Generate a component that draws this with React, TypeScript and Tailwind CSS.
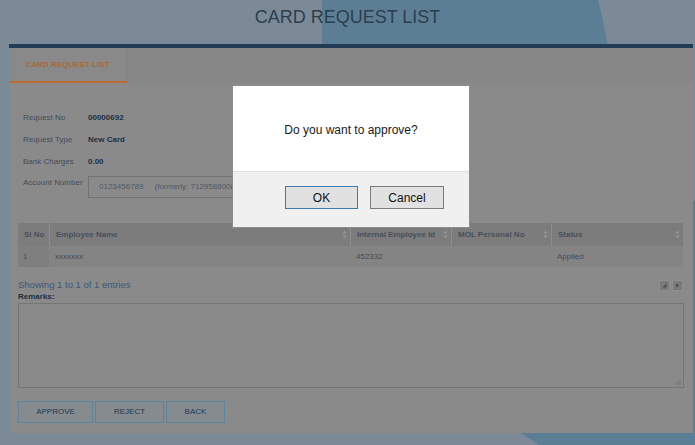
import React from 'react';

const columns = [
  { label: 'Sl No', width: 'w-[31px]', sort: false },
  { label: 'Employee Name', width: 'w-[301px]', sort: true },
  { label: 'Internal Employee Id', width: 'w-[101px]', sort: true },
  { label: 'MOL Personal No', width: 'w-[100px]', sort: true },
  { label: 'Status', width: 'w-[132px]', sort: true },
];

const details = [
  { label: 'Request No', value: '00000692' },
  { label: 'Request Type', value: 'New Card' },
  { label: 'Bank Charges', value: '0.00' },
];

function SortIcon() {
  return (
    <svg width="5" height="9" viewBox="0 0 5 9" className="shrink-0">
      <path d="M0.5 3.5 L2.5 0.5 L4.5 3.5Z" fill="#969696" />
      <path d="M0.5 5.5 L2.5 8.5 L4.5 5.5Z" fill="#969696" />
    </svg>
  );
}

function PageButton({ dir }: { dir: 'prev' | 'next' }) {
  return (
    <div className="w-[11px] h-[11px] bg-[#7a7a7a] border border-[#8f8f8f] flex items-center justify-center">
      <svg width="5" height="5" viewBox="0 0 5 5">
        {dir === 'prev' ? (
          <path d="M4.5 0.5 L4.5 4.5 L0.5 4.5Z" fill="#4c4c4c" />
        ) : (
          <path d="M1 0.5 L4 2.5 L1 4.5Z" fill="#4c4c4c" />
        )}
      </svg>
    </div>
  );
}

export default function App() {
  return (
    <div className="relative w-[695px] h-[445px] overflow-hidden bg-[#7b8a96] font-['Liberation_Sans',Arial,sans-serif]">
      {/* backdrop shapes */}
      <svg className="absolute inset-0" width="695" height="445" viewBox="0 0 695 445">
        <path d="M322 0 L598 0 Q604 22 610 60 L610 120 L322 120Z" fill="#5c7e94" />
        <path d="M521 433 L695 200 L695 445 L539 445Z" fill="#5c7e94" />
      </svg>

      <div className="relative">
        <div className="h-[44px] pt-[6px] text-center">
          <h1 className="text-[18px] leading-[22px] text-[#2b3e50]">CARD REQUEST LIST</h1>
        </div>

        <div className="ml-[9px] w-[684px] border-t-4 border-[#233c55] bg-[#8a8a8a]">
          {/* tab strip */}
          <div className="h-[35px] bg-[#878787] flex">
            <div className="w-[118px] h-full border-r border-[#808080] border-b-2 border-b-[#c0692e] bg-[#898989] flex items-center justify-center">
              <span className="text-[8px] font-bold text-[#a96a30] leading-none">CARD REQUEST LIST</span>
            </div>
          </div>

          <div className="px-[9px] pt-[24px] pb-[10px]">
            <div className="pl-[5px]">
              {details.map((d) => (
                <div key={d.label} className="h-[22px] flex items-center text-[8px]">
                  <span className="w-[65px] text-[#434c56]">{d.label}</span>
                  <span className="font-bold text-[#1c3044]">{d.value}</span>
                </div>
              ))}
              <div className="h-[25px] flex items-start text-[8px]">
                <span className="w-[65px] mt-[4px] leading-[12px] text-[#434c56]">Account Number</span>
                <div className="mt-[3px] h-[22px] w-[165px] border border-[#727272] flex items-center pl-[10px] overflow-hidden whitespace-nowrap text-[#4f5963]">
                  <span>0123456789</span>
                  <span className="ml-[11px]">(formerly: 7129588008123)</span>
                </div>
              </div>
            </div>

            {/* table */}
            <div className="mt-[25px] w-[665px] text-[8px]">
              <div className="flex h-[23px] bg-[#7c7c7c]">
                {columns.map((c, i) => (
                  <div
                    key={c.label}
                    className={`${c.width} flex items-center justify-between pl-[6px] pr-[3px] font-bold text-[#47505a] ${i > 0 ? 'border-l border-[#8d8d8d]' : ''}`}
                  >
                    <span>{c.label}</span>
                    {c.sort && <SortIcon />}
                  </div>
                ))}
              </div>
              <div className="flex h-[21px] bg-[#848484] text-[#454b52]">
                <div className="w-[31px] bg-[#7f7f7f] flex items-center pl-[5px]">1</div>
                <div className="w-[301px] flex items-center pl-[6px]">xxxxxxx</div>
                <div className="w-[101px] flex items-center pl-[6px]">452332</div>
                <div className="w-[100px] flex items-center pl-[6px]"></div>
                <div className="w-[132px] flex items-center pl-[6px]">Applied</div>
              </div>
            </div>

            <div className="mt-[11px] h-[14px] w-[665px] flex items-center justify-between">
              <span className="text-[9.5px] text-[#385a79]">Showing 1 to 1 of 1 entries</span>
              <div className="flex gap-[2px]">
                <PageButton dir="prev" />
                <PageButton dir="next" />
              </div>
            </div>

            <div className="text-[8px] leading-[10px] font-bold text-[#1c2f44]">Remarks:</div>
            <div className="relative mt-[1px] h-[85px] w-[666px] border border-[#767676] bg-[#8a8a8a]">
              <svg className="absolute right-[2px] bottom-[2px]" width="6" height="6" viewBox="0 0 6 6">
                <rect x="4.5" y="0.5" width="1" height="1" fill="#5e5e5e" />
                <rect x="2.5" y="2.5" width="1" height="1" fill="#5e5e5e" />
                <rect x="4.5" y="2.5" width="1" height="1" fill="#5e5e5e" />
                <rect x="0.5" y="4.5" width="1" height="1" fill="#5e5e5e" />
                <rect x="2.5" y="4.5" width="1" height="1" fill="#5e5e5e" />
                <rect x="4.5" y="4.5" width="1" height="1" fill="#5e5e5e" />
              </svg>
            </div>

            <div className="mt-[13px] flex gap-[2px]">
              {[
                { label: 'APPROVE', w: 'w-[75px]' },
                { label: 'REJECT', w: 'w-[69px]' },
                { label: 'BACK', w: 'w-[59px]' },
              ].map((b) => (
                <button
                  key={b.label}
                  className={`${b.w} h-[22px] border border-[#5a85a3] bg-[#868b90] text-[8px] text-[#22394f] flex items-center justify-center`}
                >
                  {b.label}
                </button>
              ))}
            </div>
          </div>
        </div>
      </div>

      {/* confirm dialog */}
      <div className="absolute left-[232px] top-[85px] w-[238px] h-[143px] bg-white border border-[#8c8c8c] flex flex-col">
        <div className="h-[85px] flex items-center justify-center pt-[2px]">
          <span className="text-[12px] text-[#1a1a1a]">Do you want to approve?</span>
        </div>
        <div className="flex-1 bg-[#f0f0f0] border-t border-[#e0e0e0] flex justify-end items-start pt-[14px] pr-[25px] gap-[12px]">
          <button className="w-[73px] h-[23px] bg-[#e1e1e1] border border-[#3c7ab0] text-[12px] text-[#111]">OK</button>
          <button className="w-[74px] h-[23px] bg-[#e1e1e1] border border-[#7a7a7a] text-[12px] text-[#111]">Cancel</button>
        </div>
      </div>
    </div>
  );
}
